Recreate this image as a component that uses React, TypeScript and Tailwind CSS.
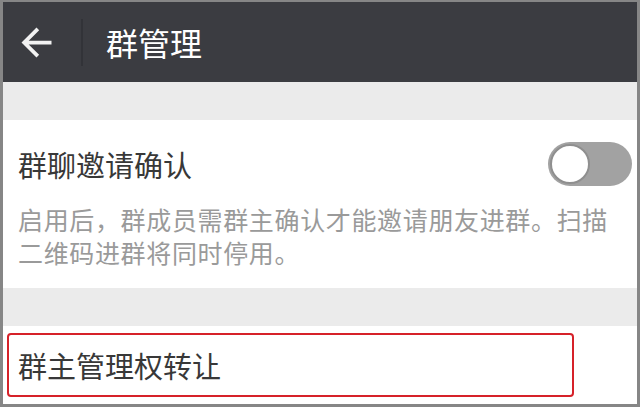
import React from "react";

const CJK = { fontFamily: '"Noto Sans CJK SC", "Noto Sans", sans-serif' };

function BackArrow() {
  return (
    <svg viewBox="0 0 24 24" className="h-[45px] w-[45px]" fill="#f2f2f2">
      <path d="M20 11H7.83l5.59-5.59L12 4l-8 8 8 8 1.41-1.41L7.83 13H20v-2z" />
    </svg>
  );
}

function Toggle() {
  return (
    <div className="flex h-[44px] w-[84px] items-center rounded-full bg-[#a2a2a2] px-[2px]">
      <div className="h-[40px] w-[40px] rounded-full border-2 border-[#8f8f8f] bg-white" />
    </div>
  );
}

export default function App() {
  return (
    <div
      className="flex h-[407px] w-[640px] flex-col overflow-hidden border-x-[3px] border-t-2 border-b-[3px] border-[#868686] bg-white"
      style={CJK}
    >
      <header className="flex h-[80px] shrink-0 items-center bg-[#3b3c41]">
        <div className="ml-[11px] flex items-center">
          <BackArrow />
        </div>
        <div className="ml-[22px] h-[47px] w-[2px] bg-[#323338]" />
        <h1 className="ml-[23px] text-[32px] leading-none text-white">群管理</h1>
      </header>

      <div className="h-[38px] shrink-0 bg-[#ebebeb]" />

      <section className="flex h-[168px] shrink-0 flex-col pl-[15px] pr-[5px] pt-[22px]">
        <div className="flex h-[44px] items-center justify-between">
          <span className="text-[29px] leading-none text-[#383838]">群聊邀请确认</span>
          <Toggle />
        </div>
        <p className="mt-[17px] text-[25px] leading-[33px] tracking-[0.65px] text-[#9a9a9a]">
          启用后，群成员需群主确认才能邀请朋友进群。扫描
          <br />
          二维码进群将同时停用。
        </p>
      </section>

      <div className="h-[38px] shrink-0 bg-[#ebebeb]" />

      <section className="flex flex-1 flex-col pl-[4px] pt-[7px]">
        <div className="flex h-[64px] w-[567px] items-center rounded-[4px] border-2 border-[#d62129] pl-[9px]">
          <span className="text-[29px] leading-none text-[#383838]">群主管理权转让</span>
        </div>
      </section>
    </div>
  );
}
